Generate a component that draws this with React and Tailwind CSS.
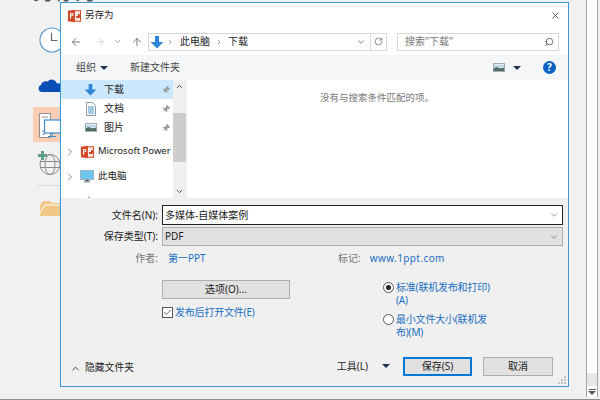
import { ChevronRight, ChevronDown, ChevronUp, ArrowLeft, ArrowRight, ArrowUp, RotateCw, Search, X, Pin, Check } from "lucide-react";

const FONT = '"Noto Sans", "Noto Sans CJK SC", sans-serif';

function PptIcon({ className }) {
  return (
    <svg viewBox="0 0 16 16" className={className}>
      <path d="M8 2h7.500v12H8z" fill="#fbe9e2" stroke="#d24726" strokeWidth="1.200" />
      <path d="M10 8a2.600 2.600 0 1 0 2.600-2.600V8z" fill="#d24726" />
      <path d="M1 2l8-1.200v14.400L1 14z" fill="#d24726" />
      <path d="M3.400 4.600h2.200a1.700 1.700 0 0 1 0 3.600H4.600v3H3.400zM4.600 5.600v1.600h1a.8.8 0 0 0 0-1.600z" fill="#fff" />
    </svg>
  );
}

function DownArrowIcon({ className }) {
  return (
    <svg viewBox="0 0 14 14" className={className}>
      <path d="M5 1h4v6h4.400L7 13.400.6 7H5z" fill="#2f86d8" />
    </svg>
  );
}

function DocIcon() {
  return (
    <svg viewBox="0 0 12 14" className="w-[12px] h-[14px]">
      <path d="M1.500.5h6l3 3v10h-9z" fill="#fff" stroke="#8a9aa8" />
      <path d="M3 5h6M3 7h6M3 9h6M3 11h6" stroke="#4a90c8" />
    </svg>
  );
}

function PictureIcon({ className }) {
  return (
    <svg viewBox="0 0 14 10" className={className}>
      <rect x=".5" y=".5" width="13" height="9" fill="#eef3f6" stroke="#8d99a3" />
      <path d="M1 2h12v3H1z" fill="#bcd6e8" />
      <path d="M1 9V6l3-1.500L8 6l5-.6V9z" fill="#4e6f62" />
    </svg>
  );
}

function Caret({ className = "" }) {
  return <span className={`inline-block w-0 h-0 border-l-[4px] border-r-[4px] border-t-[4px] border-l-transparent border-r-transparent border-t-[#1f3350] ${className}`} />;
}

function NavRow({ icon, label, active }) {
  return (
    <div className={`h-[19px] shrink-0 flex items-center ${active ? "bg-[#cce8ff]" : ""}`}>
      <div className="w-[43px] flex justify-end pr-[7px]">{icon}</div>
      <span className="text-[10px] text-[#222]">{label}</span>
      <Pin className="ml-auto mr-[3px] w-[8px] h-[8px] text-[#9a9a9a] fill-[#9a9a9a] rotate-45" />
    </div>
  );
}

function TreeRow({ icon, label }) {
  return (
    <div className="h-[25px] shrink-0 flex items-center whitespace-nowrap">
      <ChevronRight className="ml-[3px] w-[12px] h-[12px] shrink-0 text-[#8a8a8a]" strokeWidth={2} />
      <div className="ml-[4px] w-[18px] shrink-0">{icon}</div>
      <span className="text-[9.500px] text-[#222]">{label}</span>
    </div>
  );
}

function FormLabel({ children, muted }) {
  return <span className={`w-[97px] mr-px shrink-0 text-right text-[10px] ${muted ? "text-[#777]" : "text-[#222]"}`}>{children}</span>;
}

// PowerPoint backstage behind the dialog, mostly covered by it
function Backdrop() {
  return (
    <div className="w-[100px] shrink-0 h-full flex flex-col items-start pl-[38px]">
      <div className="h-[2px] -ml-[5px] overflow-hidden flex items-end">
        <span className="text-[21px] leading-none text-[#555] whitespace-nowrap">另存为</span>
      </div>
      <svg viewBox="0 0 27 27" className="mt-[25px] ml-px w-[26px] h-[26px]">
        <circle cx="13.500" cy="13.500" r="12.500" fill="#fff" stroke="#5b9bd5" strokeWidth="1.200" />
        <path d="M13 6v8h6" fill="none" stroke="#666" strokeWidth="1.200" />
      </svg>
      <svg viewBox="0 0 22 14" className="mt-[25px] w-[22px] h-[14px]">
        <path d="M4 14a3.600 3.600 0 0 1-1-7 5 5 0 0 1 6.500-3.500A5.500 5.500 0 0 1 19 5.500 4.300 4.300 0 0 1 22 14z" fill="#0a4fb5" />
      </svg>
      <div className="mt-[15px] -ml-[5px] w-[40px] h-[35px] bg-[#fccdb5] flex items-center">
        <svg viewBox="0 0 27 35" className="w-[27px] h-[35px]">
          <path d="M6.500 6.500h11v24h-11z" fill="#fff" stroke="#8d8d8d" />
          <path d="M9 10h6M9 24h3M9 27h3" stroke="#8d8d8d" />
          <rect x="11.500" y="13" width="16" height="13" fill="#fff" stroke="#3e8ed0" strokeWidth="1.200" />
          <path d="M19 26v3M15 29.500h8" stroke="#3e8ed0" strokeWidth="1.200" />
        </svg>
      </div>
      <svg viewBox="0 0 24 24" className="mt-[9px] w-[24px] h-[24px]">
        <circle cx="12" cy="13.500" r="10" fill="none" stroke="#8a8a8a" />
        <ellipse cx="12" cy="13.500" rx="5" ry="10" fill="none" stroke="#8a8a8a" />
        <path d="M2 10.500h20M2 16.500h20" stroke="#8a8a8a" />
        <path d="M3 0h3v3h3v3H6v3H3V6H0V3h3z" fill="#5f9f86" />
      </svg>
      <div className="mt-[10px] w-[22px] h-px bg-[#d8d8d8]" />
      <svg viewBox="0 0 22 16" className="mt-[14px] ml-px w-[22px] h-[16px]">
        <path d="M1 16V5l3-4h7l2 2h9v13z" fill="#f0c987" />
        <path d="M1 13L6 5h16" fill="none" stroke="#fff" />
      </svg>
    </div>
  );
}

function RightScrollbar() {
  return (
    <div className="absolute top-0 right-[2px] bottom-[2px] w-[12px] border-x border-[#a3a3a3] bg-white flex flex-col">
      <div className="flex-1" />
      <div className="h-[13px] bg-[#e8e8e8]" />
      <div className="h-[11px] flex flex-col items-center justify-center bg-white">
        <span className="w-[7px] h-px bg-[#555]" />
        <Caret className="mt-px border-t-[#555] border-l-[3px] border-r-[3px]" />
      </div>
    </div>
  );
}

function Dialog() {
  return (
    <div className="absolute left-[60px] top-[2px] w-[509px] h-[385px] border border-[#3d97dc] bg-white flex flex-col">
      <div className="h-[25px] shrink-0 flex items-center pl-[6px] pr-[7px]">
        <PptIcon className="w-[14px] h-[14px]" />
        <span className="ml-[4px] text-[9.500px] text-[#222]">另存为</span>
        <X className="ml-auto w-[11px] h-[11px] text-[#111]" strokeWidth={1.400} />
      </div>
      <div className="h-[27px] shrink-0 flex items-center">
        <ArrowLeft className="ml-[9px] w-[12px] h-[12px] text-[#777]" strokeWidth={2} />
        <ArrowRight className="ml-[12px] w-[12px] h-[12px] text-[#d5d5d5]" strokeWidth={2} />
        <ChevronDown className="ml-[7px] w-[9px] h-[9px] text-[#888]" strokeWidth={2} />
        <ArrowUp className="ml-[9px] w-[12px] h-[12px] text-[#777]" strokeWidth={2} />
        <div className="ml-[5px] w-[239px] h-[18px] border border-[#d9d9d9] flex items-center">
          <DownArrowIcon className="ml-[1px] w-[14px] h-[14px]" />
          <ChevronRight className="ml-[2px] w-[8px] h-[8px] text-[#777]" strokeWidth={2} />
          <span className="ml-[6px] text-[10px] text-[#222]">此电脑</span>
          <ChevronRight className="ml-[5px] w-[8px] h-[8px] text-[#777]" strokeWidth={2} />
          <span className="ml-[5px] text-[10px] text-[#222]">下载</span>
          <ChevronDown className="ml-auto mr-[4px] w-[10px] h-[10px] text-[#666]" strokeWidth={2} />
          <div className="w-[16px] h-full border-l border-[#d9d9d9] flex items-center justify-center">
            <RotateCw className="w-[9px] h-[9px] text-[#666]" strokeWidth={2} />
          </div>
        </div>
        <div className="ml-[10px] w-[162px] h-[18px] border border-[#d9d9d9] flex items-center pl-[7px] pr-[4px]">
          <span className="text-[10px] text-[#777]">搜索"下载"</span>
          <Search className="ml-auto w-[10px] h-[10px] text-[#555] -scale-x-100" strokeWidth={2} />
        </div>
      </div>
      <div className="h-[25px] shrink-0 bg-[#f5f6f7] flex items-center">
        <span className="ml-[15px] text-[10px] text-[#444]">组织</span>
        <Caret className="ml-[4px]" />
        <span className="ml-[22px] text-[10px] text-[#444]">新建文件夹</span>
        <PictureIcon className="ml-auto w-[12px] h-[9px]" />
        <Caret className="ml-[8px]" />
        <div className="ml-[22px] mr-[12px] w-[13px] h-[13px] rounded-full bg-[#0a63c0] text-white text-[10px] font-bold flex items-center justify-center">?</div>
      </div>
      <div className="h-[118px] shrink-0 flex overflow-hidden">
        <div className="w-[112px] shrink-0 flex flex-col overflow-hidden">
          <NavRow active icon={<DownArrowIcon className="w-[13px] h-[13px]" />} label="下载" />
          <NavRow icon={<DocIcon />} label="文档" />
          <NavRow icon={<PictureIcon className="w-[12px] h-[9px]" />} label="图片" />
          <div className="h-[2px] shrink-0" />
          <TreeRow icon={<PptIcon className="w-[14px] h-[14px]" />} label="Microsoft Power" />
          <TreeRow
            icon={
              <svg viewBox="0 0 14 13" className="w-[14px] h-[13px]">
                <rect x=".5" y=".5" width="13" height="9" fill="#6cc6ee" stroke="#9fb4c0" />
                <path d="M5 10h4v1.500H5zM3.500 12h7" stroke="#8f9ea8" />
              </svg>
            }
            label="此电脑"
          />
          <svg viewBox="0 0 6 4" className="mt-[7px] ml-[25px] w-[6px] h-[4px] shrink-0">
            <path d="M0 4l3-4 3 4z" fill="#8fbbe0" />
          </svg>
        </div>
        <div className="w-[13px] shrink-0 bg-[#f0f0f0] flex flex-col">
          <div className="h-[13px] flex items-center justify-center">
            <ChevronUp className="w-[9px] h-[9px] text-[#444]" strokeWidth={2.500} />
          </div>
          <div className="mt-[20px] h-[49px] bg-[#cdcdcd]" />
          <div className="mt-auto h-[13px] flex items-center justify-center">
            <ChevronDown className="w-[9px] h-[9px] text-[#444]" strokeWidth={2.500} />
          </div>
        </div>
        <div className="flex-1 border-l border-[#f0f0f0] pl-[133px] pt-[11px]">
          <span className="block text-[9.500px] text-[#777]">没有与搜索条件匹配的项。</span>
        </div>
      </div>
      <div className="flex-1 bg-[#f0f0f0] relative flex flex-col pt-[7px] pr-[5px]">
        <div className="flex items-center">
          <FormLabel>文件名(N):</FormLabel>
          <div className="ml-[3px] flex-1 h-[20px] bg-white border border-[#222] flex items-center pl-[2px] pr-[3px]">
            <span className="text-[10px] text-[#222]">多媒体-自媒体案例</span>
            <ChevronDown className="ml-auto w-[10px] h-[10px] text-[#555]" strokeWidth={1.500} />
          </div>
        </div>
        <div className="mt-[2px] flex items-center">
          <FormLabel>保存类型(T):</FormLabel>
          <div className="ml-[3px] flex-1 h-[19px] bg-[#e1e1e1] border border-[#adadad] flex items-center pl-[2px] pr-[3px]">
            <span className="text-[10px] text-[#222]">PDF</span>
            <ChevronDown className="ml-auto w-[10px] h-[10px] text-[#555]" strokeWidth={1.500} />
          </div>
        </div>
        <div className="mt-[4px] h-[16px] flex items-center">
          <FormLabel muted>作者:</FormLabel>
          <span className="ml-[9px] w-[170px] text-[10px] text-[#1a6fc0]">第一PPT</span>
          <span className="text-[10px] text-[#777]">标记:</span>
          <span className="ml-[9px] text-[10px] tracking-[0.4px] text-[#1a6fc0]">www.1ppt.com</span>
        </div>
        <div className="mt-[14px] flex">
          <div className="ml-[101px] w-[128px] flex flex-col">
            <div className="h-[19px] bg-[#e1e1e1] border border-[#adadad] flex items-center justify-center text-[10px] text-[#222]">选项(O)...</div>
            <div className="mt-[6px] flex items-center">
              <span className="w-[11px] h-[11px] border border-[#555] bg-white flex items-center justify-center">
                <Check className="w-[9px] h-[9px] text-[#333]" strokeWidth={2} />
              </span>
              <span className="ml-[2px] text-[10px] tracking-[-0.2px] text-[#1a6fc0] whitespace-nowrap">发布后打开文件(E)</span>
            </div>
          </div>
          <div className="ml-[93px] w-[112px] flex flex-col">
            <div className="flex mt-px">
              <span className="mt-[1px] w-[11px] h-[11px] shrink-0 rounded-full border border-[#555] bg-white flex items-center justify-center">
                <span className="w-[5px] h-[5px] rounded-full bg-[#222]" />
              </span>
              <span className="ml-[2px] text-[10px] tracking-[-0.2px] leading-[13px] text-[#1a6fc0]">标准(联机发布和打印)(A)</span>
            </div>
            <div className="mt-[6px] flex">
              <span className="mt-[1px] w-[11px] h-[11px] shrink-0 rounded-full border border-[#555] bg-white" />
              <span className="ml-[2px] text-[10px] tracking-[-0.2px] leading-[13px] text-[#1a6fc0]">最小文件大小(联机发布)(M)</span>
            </div>
          </div>
        </div>
        <div className="mt-auto mb-[10px] flex items-center">
          <ChevronUp className="ml-[9px] mt-[5px] w-[11px] h-[11px] text-[#333]" strokeWidth={2} />
          <span className="ml-[4px] mt-[5px] text-[9.800px] text-[#222]">隐藏文件夹</span>
          <span className="ml-auto text-[10px] text-[#222]">工具(L)</span>
          <Caret className="ml-[14px]" />
          <div className="ml-[13px] w-[69px] h-[19px] bg-[#e1e1e1] border-2 border-[#0078d7] flex items-center justify-center text-[10px] text-[#222]">保存(S)</div>
          <div className="ml-[11px] mr-[10px] w-[70px] h-[19px] bg-[#e1e1e1] border border-[#adadad] flex items-center justify-center text-[10px] text-[#222]">取消</div>
        </div>
        {/* resize grip */}
        <svg viewBox="0 0 8 8" className="absolute right-[2px] bottom-[2px] w-[8px] h-[8px]">
          <path d="M6 0h2v2H6zM3 3h2v2H3zM6 3h2v2H6zM0 6h2v2H0zM3 6h2v2H3zM6 6h2v2H6z" fill="#c4c4c4" />
        </svg>
      </div>
    </div>
  );
}

export default function App() {
  return (
    <div className="relative w-[600px] h-[400px] overflow-hidden bg-[#f1f1f1] border-b border-[#8f8f8f] flex" style={{ fontFamily: FONT }}>
      <Backdrop />
      <Dialog />
      <RightScrollbar />
    </div>
  );
}
